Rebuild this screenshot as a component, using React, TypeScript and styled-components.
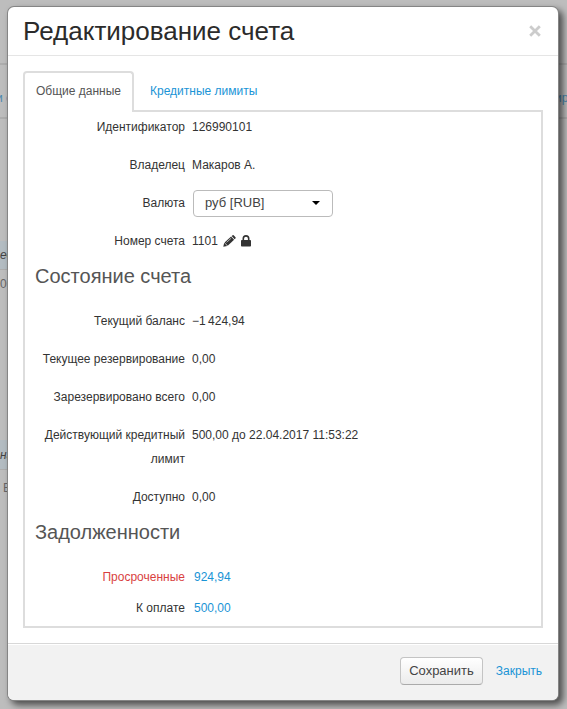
import React from "react";
import styled, { createGlobalStyle, css } from "styled-components";

const BLUE = "#1a94d6";
const LINE = "#dddddd";

const GlobalStyle = createGlobalStyle`
  *, *::before, *::after { box-sizing: border-box; }
  body {
    margin: 0;
    background: #bdbdbd;
    color: #333333;
    font: 12px/24px "Liberation Sans", Arial, sans-serif;
  }
  a { color: ${BLUE}; text-decoration: none; }
`;

const Screen = styled.div`
  position: relative;
  min-height: 100vh;
  padding: 7px 9px 8px 8px;
  overflow: hidden;
`;

const Backdrop = styled.div`
  position: absolute;
  inset: 0;
  display: flex;
  flex-direction: column;
  overflow: hidden;
  white-space: nowrap;
`;

const BackRow = styled.div<{ $height: number; $tinted?: boolean; $line?: "thick" | "thin" }>`
  display: flex;
  flex: none;
  justify-content: space-between;
  align-items: center;
  width: ${(p) => (p.$tinted ? "50%" : "100%")};
  height: ${(p) => p.$height}px;
  background: ${(p) => (p.$tinted ? "#b3bcc2" : "transparent")};
  ${(p) => p.$line && css`border-bottom: ${p.$line === "thick" ? 2 : 1}px solid #adadad;`}
`;

const BackText = styled.span<{ $tone: "blue" | "grey" | "dark"; $clipped?: boolean; $indent?: boolean }>`
  display: flex;
  justify-content: ${(p) => (p.$clipped ? "flex-end" : "flex-start")};
  width: 12px;
  padding-left: ${(p) => (p.$indent ? 3 : 0)}px;
  color: ${(p) => ({ blue: "#4a88b0", grey: "#666666", dark: "#444444" })[p.$tone]};
  font-style: ${(p) => (p.$tone === "dark" ? "italic" : "normal")};
`;

const Dialog = styled.section`
  position: relative;
  background: #ffffff;
  border-radius: 6px;
  box-shadow: 0 0 0 1px #858585, 4px 4px 7px 1px rgba(0, 0, 0, 0.6);
`;

const Header = styled.header`
  display: flex;
  align-items: center;
  justify-content: space-between;
  height: 49px;
  padding: 0 15px;
  border-bottom: 1px solid #e5e5e5;
`;

const Title = styled.h1`
  margin: 0;
  color: #2b2b2b;
  font-size: 26px;
  font-weight: 400;
  line-height: 32px;
`;

const CloseButton = styled.button`
  display: flex;
  padding: 2px;
  border: 0;
  background: none;
  color: #cccccc;
  cursor: pointer;
`;

const Body = styled.div`
  padding: 15px;
`;

const Tabs = styled.div`
  display: flex;
  align-items: stretch;
  height: 41px;
  border-bottom: 2px solid ${LINE};
`;

const Tab = styled.button<{ $active?: boolean }>`
  height: 41px;
  padding: 0 11px 4px;
  border: 2px solid transparent;
  border-bottom: 0;
  border-radius: 4px 4px 0 0;
  background: transparent;
  color: ${BLUE};
  font: inherit;
  cursor: pointer;
  ${(p) =>
    p.$active &&
    css`
      margin-right: 3px;
      border-color: ${LINE};
      background: #ffffff;
      color: #555555;
    `}
`;

const Panel = styled.div`
  padding: 3px 10px 6px;
  border: 2px solid ${LINE};
  border-top: 0;
`;

const Fields = styled.dl<{ $compact?: boolean }>`
  display: flex;
  flex-direction: column;
  gap: ${(p) => (p.$compact ? 7 : 14)}px;
  margin: 0;
`;

const Row = styled.div`
  display: grid;
  grid-template-columns: 150px 1fr;
  column-gap: 7px;
  min-height: 24px;
`;

const Name = styled.dt<{ $overdue?: boolean }>`
  color: ${(p) => (p.$overdue ? "#d93f3f" : "inherit")};
  text-align: right;
`;

const Value = styled.dd<{ $linked?: boolean }>`
  display: flex;
  align-items: center;
  gap: 5px;
  height: 24px;
  margin: 0;
  padding-left: ${(p) => (p.$linked ? 2 : 0)}px;
`;

const Section = styled.h2`
  margin: 10px 0 20px;
  color: #555555;
  font-size: 20px;
  font-weight: 400;
  line-height: 26px;
`;

const SelectBox = styled.span`
  display: grid;
  grid-template-columns: 1fr 21px;
  align-items: center;
  width: 140px;
  margin-left: 1px;
  > * { grid-row: 1; }
  > svg { grid-column: 2; pointer-events: none; z-index: 1; }
`;

const Select = styled.select`
  grid-column: 1 / 3;
  width: 100%;
  height: 27px;
  padding: 0 24px 0 11px;
  appearance: none;
  border: 1px solid #bbbbbb;
  border-radius: 4px;
  background: #ffffff;
  color: #444444;
  font: 13px/24px "Liberation Sans", Arial, sans-serif;
`;

const IconButton = styled.button`
  display: flex;
  padding: 0;
  border: 0;
  background: none;
  color: #333333;
  cursor: pointer;
`;

const Footer = styled.footer`
  display: flex;
  align-items: center;
  justify-content: flex-end;
  gap: 13px;
  padding: 13px 16px 15px;
  border-top: 1px solid #d8d8d8;
  border-radius: 0 0 6px 6px;
  background: #f2f2f2;
  box-shadow: inset 0 1px 0 #ffffff;
`;

const SaveButton = styled.button`
  height: 28px;
  padding: 0 8px;
  border: 1px solid #c4c4c4;
  border-bottom-color: #aaaaaa;
  border-radius: 4px;
  background: linear-gradient(#ffffff, #ebebeb);
  color: #444444;
  font: 13px/24px "Liberation Sans", Arial, sans-serif;
  cursor: pointer;
`;

function Pencil() {
  return (
    <svg width="13" height="12" viewBox="0 0 13 12" fill="currentColor" aria-hidden="true">
      <path d="M.3 11.8 1.2 7.8 4.2 11z" />
      <path d="M1.6 7.4 8.1 1.6 11.1 4.8 4.7 10.8z" />
      <path d="M8.7 1.1 9.6.3Q10.3-.2 10.9.5L12.5 2.2Q13 2.8 12.4 3.4L11.6 4.2z" />
      <path d="M3.5 7.4 8.2 3.2" stroke="#fff" strokeWidth=".6" />
    </svg>
  );
}

function Lock() {
  return (
    <svg width="10" height="12" viewBox="0 0 10 12" aria-hidden="true">
      <path d="M2.3 6V3.6a2.7 2.7 0 0 1 5.4 0V6" fill="none" stroke="currentColor" strokeWidth="1.6" />
      <rect x="0" y="5" width="10" height="6.5" rx=".8" fill="currentColor" />
    </svg>
  );
}

const balances = [
  ["Текущий баланс", "−1\u2009424,94"],
  ["Текущее резервирование", "0,00"],
  ["Зарезервировано всего", "0,00"],
  ["Действующий кредитный лимит", "500,00 до 22.04.2017 11:53:22"],
  ["Доступно", "0,00"],
];

export default function App() {
  return (
    <>
      <GlobalStyle />
      <Screen>
        <Backdrop aria-hidden="true">
          <BackRow $height={65} $line="thick" />
          <BackRow $height={20} />
          <BackRow $height={26}>
            <BackText $tone="blue" $clipped>и&nbsp;с</BackText>
            <BackText $tone="blue">ире</BackText>
          </BackRow>
          <BackRow $height={8} $line="thick" />
          <BackRow $height={122} />
          <BackRow $height={29} $line="thin" $tinted>
            <BackText $tone="dark">ед</BackText>
          </BackRow>
          <BackRow $height={27}>
            <BackText $tone="grey">00</BackText>
          </BackRow>
          <BackRow $height={143} />
          <BackRow $height={30} $line="thin" $tinted>
            <BackText $tone="dark">на</BackText>
          </BackRow>
          <BackRow $height={36}>
            <BackText $tone="grey" $indent>В</BackText>
          </BackRow>
        </Backdrop>
        <Dialog role="dialog" aria-labelledby="dialog-title">
          <Header>
            <Title id="dialog-title">Редактирование счета</Title>
            <CloseButton aria-label="Закрыть окно">
              <svg width="12" height="12" viewBox="0 0 12 12" stroke="currentColor" strokeWidth="2.8">
                <path d="M1.2 1.2 10.8 10.8M10.8 1.2 1.2 10.8" />
              </svg>
            </CloseButton>
          </Header>
          <Body>
            <Tabs role="tablist">
              <Tab role="tab" aria-selected="true" $active>Общие данные</Tab>
              <Tab role="tab" aria-selected="false">Кредитные лимиты</Tab>
            </Tabs>
            <Panel role="tabpanel">
              <Fields>
                <Row>
                  <Name>Идентификатор</Name>
                  <Value>126990101</Value>
                </Row>
                <Row>
                  <Name>Владелец</Name>
                  <Value>Макаров А.</Value>
                </Row>
                <Row>
                  <Name><label htmlFor="currency">Валюта</label></Name>
                  <Value>
                    <SelectBox>
                      <Select id="currency">
                        <option>руб [RUB]</option>
                      </Select>
                      <svg width="8" height="4" viewBox="0 0 8 4"><path d="M0 0h8L4 4z" /></svg>
                    </SelectBox>
                  </Value>
                </Row>
                <Row>
                  <Name>Номер счета</Name>
                  <Value>
                    1101
                    <IconButton aria-label="Изменить"><Pencil /></IconButton>
                    <IconButton aria-label="Заблокировать"><Lock /></IconButton>
                  </Value>
                </Row>
              </Fields>
              <Section>Состояние счета</Section>
              <Fields>
                {balances.map(([name, value]) => (
                  <Row key={name}>
                    <Name>{name}</Name>
                    <Value>{value}</Value>
                  </Row>
                ))}
              </Fields>
              <Section>Задолженности</Section>
              <Fields $compact>
                <Row>
                  <Name $overdue>Просроченные</Name>
                  <Value $linked><a href="#overdue">924,94</a></Value>
                </Row>
                <Row>
                  <Name>К оплате</Name>
                  <Value $linked><a href="#due">500,00</a></Value>
                </Row>
              </Fields>
            </Panel>
          </Body>
          <Footer>
            <SaveButton>Сохранить</SaveButton>
            <a href="#close">Закрыть</a>
          </Footer>
        </Dialog>
      </Screen>
    </>
  );
}
